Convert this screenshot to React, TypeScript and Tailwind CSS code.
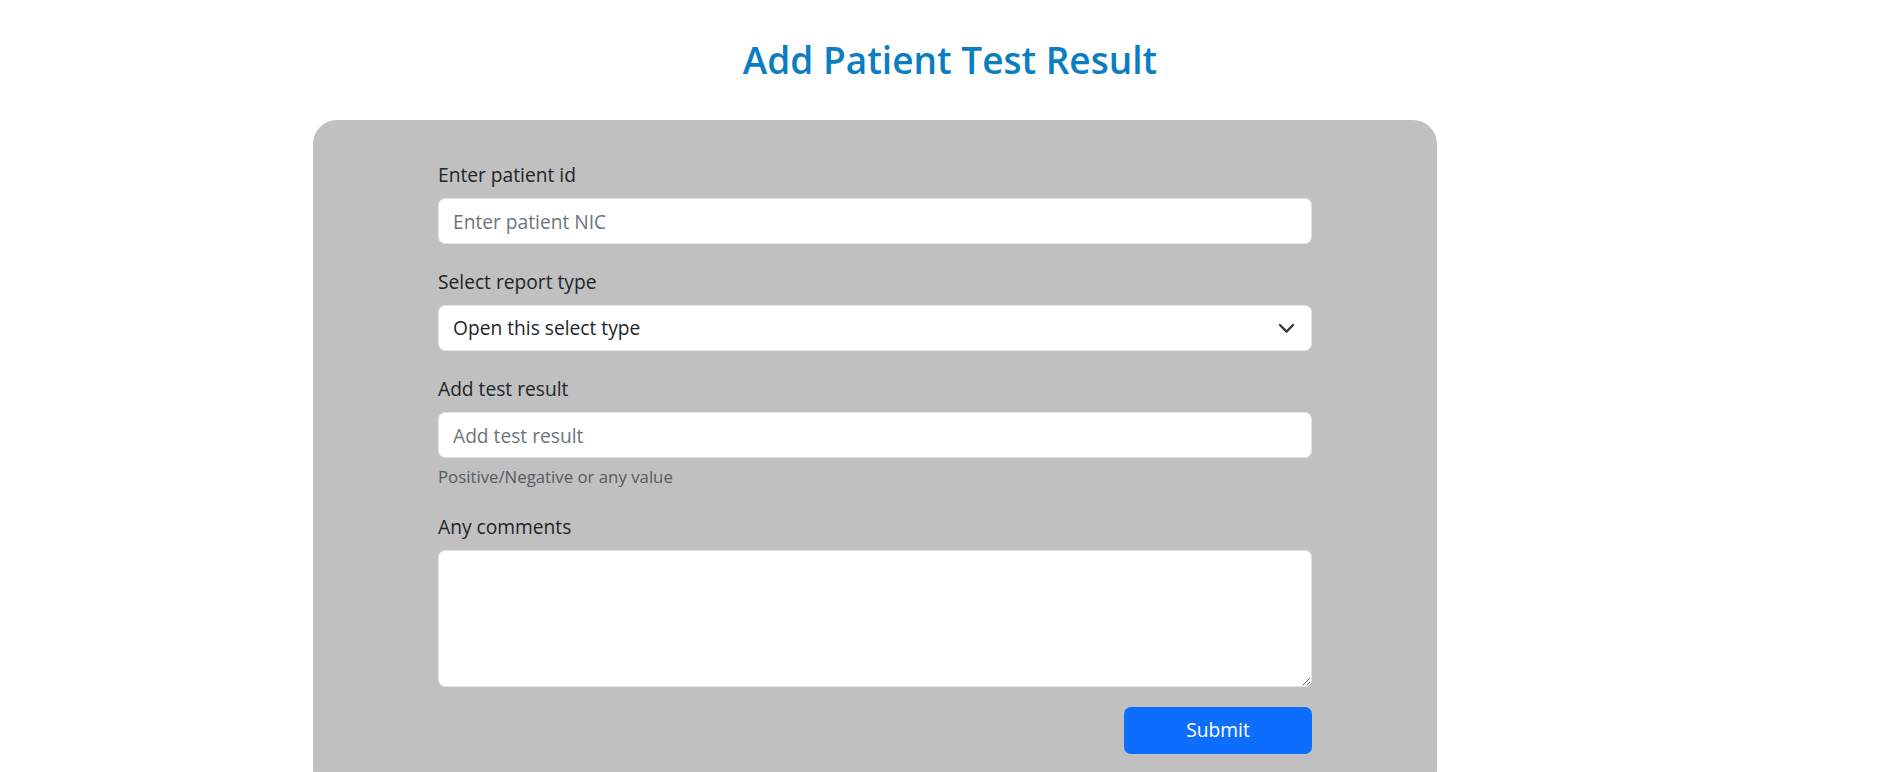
import React from "react";

const font = { fontFamily: '"Open Sans", "Noto Sans", sans-serif' };

function Field({ label, children }: { label: string; children: React.ReactNode }) {
  return (
    <div className="flex flex-col">
      <label className="mt-[3px] mb-[9px] text-[19.2px] leading-[29px] text-[#212529]">{label}</label>
      {children}
    </div>
  );
}

export default function App() {
  return (
    <div className="min-h-screen w-full bg-white" style={font}>
      <h2 className="pt-[39px] pl-[14px] text-center text-[37px] font-semibold leading-[42px] text-[#0b7dc1]">
        Add Patient Test Result
      </h2>
      <div className="mt-[39px] ml-[313px] w-[1124px] rounded-[24px] bg-[#c0c0c0] px-[125px] pt-[37px] pb-[40px]">
        <form className="flex flex-col gap-[20px]" onSubmit={(e) => e.preventDefault()}>
          <Field label="Enter patient id">
            <input
              type="text"
              placeholder="Enter patient NIC"
              className="h-[46px] w-full rounded-[7px] border border-[#dee2e6] bg-white px-[14px] text-[19.2px] text-[#212529] outline-none placeholder:text-[#6c757d]"
            />
          </Field>

          <Field label="Select report type">
            <div className="relative">
              <select
                defaultValue=""
                className="h-[46px] w-full appearance-none rounded-[7px] border border-[#dee2e6] bg-white px-[14px] text-[19.2px] text-[#212529] outline-none"
              >
                <option value="">Open this select type</option>
                <option value="blood">Blood test</option>
                <option value="urine">Urine test</option>
                <option value="xray">X-Ray</option>
              </select>
              <svg
                className="pointer-events-none absolute right-[16px] top-1/2 -translate-y-1/2"
                width="19"
                height="19"
                viewBox="0 0 16 16"
                fill="none"
                stroke="#343a40"
                strokeWidth="2"
                strokeLinecap="round"
                strokeLinejoin="round"
              >
                <path d="M2.5 5.5l5.5 5.5 5.5-5.5" />
              </svg>
            </div>
          </Field>

          <Field label="Add test result">
            <input
              type="text"
              placeholder="Add test result"
              className="h-[46px] w-full rounded-[7px] border border-[#dee2e6] bg-white px-[14px] text-[19.2px] text-[#212529] outline-none placeholder:text-[#6c757d]"
            />
            <div className="mt-[6px] text-[16.8px] leading-[25px] text-[#555b61]">
              Positive/Negative or any value
            </div>
          </Field>

          <Field label="Any comments">
            <textarea className="h-[137px] w-full rounded-[7px] border border-[#dee2e6] bg-white px-[14px] py-[8px] text-[19.2px] text-[#212529] outline-none" />
          </Field>

          <div className="flex justify-end">
            <button
              type="submit"
              className="h-[47px] w-[188px] rounded-[7px] bg-[#0d6efd] text-[19.2px] text-white"
            >
              Submit
            </button>
          </div>
        </form>
      </div>
    </div>
  );
}
